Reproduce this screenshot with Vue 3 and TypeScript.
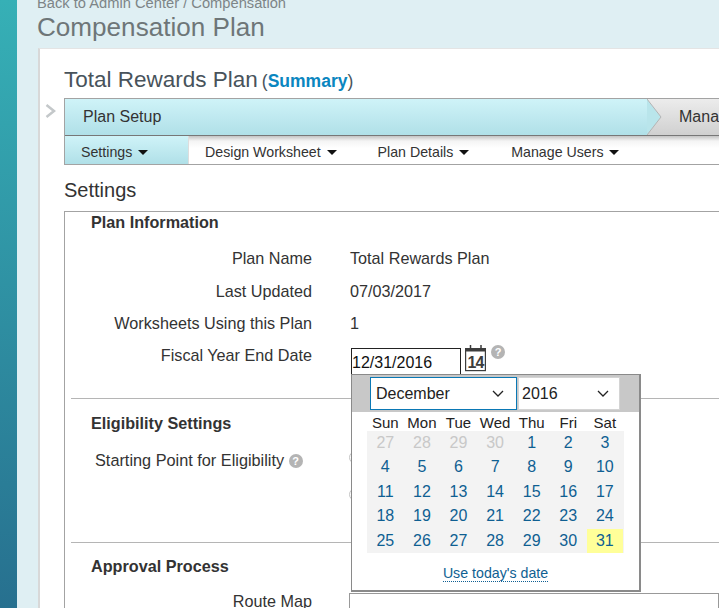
<script setup lang="ts">
const planRows = [
  { label: 'Plan Name', value: 'Total Rewards Plan' },
  { label: 'Last Updated', value: '07/03/2017' },
  { label: 'Worksheets Using this Plan', value: '1' },
]

const subTabs = ['Settings', 'Design Worksheet', 'Plan Details', 'Manage Users']
const weekDays = ['Sun', 'Mon', 'Tue', 'Wed', 'Thu', 'Fri', 'Sat']

// December 2016, with the tail of November greyed out
const days = [
  ...[27, 28, 29, 30].map((n) => ({ n, muted: true })),
  ...Array.from({ length: 31 }, (_, i) => ({ n: i + 1, muted: false })),
]
</script>

<template>
  <div class="page">
    <aside class="side-strip"></aside>
    <main class="main">
      <div class="crumbs">Back to Admin Center / Compensation</div>
      <h1 class="page-title">Compensation Plan</h1>

      <section class="card">
        <h2 class="plan-title">Total Rewards Plan<small>(<a>Summary</a>)</small></h2>

        <div class="wizard-wrap">
          <svg class="collapse" width="11" height="14" viewBox="0 0 11 14">
            <path d="M1.5 1 L9 7 L1.5 13" fill="none" stroke="#c4c8ca" stroke-width="2.5" />
          </svg>
          <div class="wizard">
            <div class="steps">
              <div class="step active">Plan Setup</div>
              <svg class="arrow" width="15" height="36" viewBox="0 0 15 36">
                <path d="M0 0 L14 18 L0 36 Z" fill="#b9e5eb" />
                <path d="M0 0 L14 18 L0 36" fill="none" stroke="#b4b4b4" />
              </svg>
              <div class="step other">Manage Forms</div>
            </div>
            <div class="sub-tabs">
              <div v-for="(tab, i) in subTabs" :key="tab" class="sub-tab" :class="{ current: i === 0 }">
                {{ tab }} <i class="caret"></i>
              </div>
            </div>
          </div>
        </div>

        <h3 class="section-title">Settings</h3>

        <div class="settings-box">
          <div class="group first">
            <h4>Plan Information</h4>
            <div v-for="row in planRows" :key="row.label" class="row">
              <label>{{ row.label }}</label>
              <span>{{ row.value }}</span>
            </div>
            <div class="row date-row">
              <label>Fiscal Year End Date</label>
              <div class="date-field">
                <div class="date-input">12/31/2016</div>
                <svg class="cal-icon" width="23" height="27" viewBox="0 0 23 27">
                  <rect x="1.6" y="3.6" width="19.8" height="22" fill="#fff" stroke="#3d3d3d" stroke-width="1.2" />
                  <rect x="1" y="3" width="21" height="3.5" fill="#3d3d3d" />
                  <path d="M6.5 0v5.5M17 0v5.5" stroke="#3d3d3d" stroke-width="1.5" />
                  <text x="11.5" y="22.5" text-anchor="middle" class="cal-num">14</text>
                </svg>
                <span class="help date-help">?</span>

                <div class="calendar">
                  <div class="cal-head">
                    <div class="fake-select month">
                      December
                      <svg width="12" height="7" viewBox="0 0 12 7"><path d="M1 1l5 5 5-5" fill="none" stroke="#222" stroke-width="1.3" /></svg>
                    </div>
                    <div class="fake-select year">
                      2016
                      <svg width="12" height="7" viewBox="0 0 12 7"><path d="M1 1l5 5 5-5" fill="none" stroke="#222" stroke-width="1.3" /></svg>
                    </div>
                  </div>
                  <div class="cal-weekdays">
                    <span v-for="d in weekDays" :key="d">{{ d }}</span>
                  </div>
                  <div class="cal-grid">
                    <span
                      v-for="d in days"
                      :key="(d.muted ? 'p' : 'c') + d.n"
                      :class="{ muted: d.muted, selected: !d.muted && d.n === 31 }"
                    >{{ d.n }}</span>
                  </div>
                  <div class="cal-foot"><a>Use today's date</a></div>
                </div>
              </div>
            </div>
          </div>

          <div class="group eligibility">
            <h4>Eligibility Settings</h4>
            <div class="start-row">
              <label>Starting Point for Eligibility <span class="help">?</span></label>
              <div class="radios">
                <i class="radio"></i>
                <i class="radio"></i>
              </div>
            </div>
          </div>

          <div class="group approval">
            <h4>Approval Process</h4>
            <div class="row route-row">
              <label>Route Map</label>
              <div class="route-input"></div>
            </div>
          </div>
        </div>
      </section>
    </main>
  </div>
</template>

<style scoped>
.page {
  display: flex;
  width: 719px;
  height: 608px;
  overflow: hidden;
  background: #dfeff3;
  font-family: "Liberation Sans", Arial, sans-serif;
  color: #333;
}

.side-strip {
  flex: 0 0 17px;
  background: linear-gradient(180deg, #36b0b6 0%, #27708f 100%);
}

.main {
  flex: 1;
  min-width: 0;
  padding-left: 21px;
}

.crumbs {
  margin: -5px 0 0 -1px;
  font-size: 14.7px;
  line-height: 16px;
  color: #7d8587;
}

.page-title {
  margin: -1px 0 0 -1px;
  font-size: 26.1px;
  font-weight: normal;
  line-height: 34px;
  color: #6e7678;
}

.card {
  height: 600px;
  margin-top: 4px;
  padding-top: 17px;
  background: #fff;
  border-left: 2px solid #d8d8d8;
  border-top: 1px solid #e4e4e4;
}

.plan-title {
  margin: 0 0 0 24px;
  font-size: 22.5px;
  font-weight: normal;
  line-height: 28px;
  color: #48535b;
}

.plan-title small {
  font-size: 17.5px;
  margin-left: 4px;
}

.plan-title a {
  font-weight: bold;
  color: #0a86c0;
}

.wizard-wrap {
  position: relative;
  margin: 3px 0 0 24px;
}

.collapse {
  position: absolute;
  left: -19px;
  top: 6px;
}

.wizard {
  border: 1px solid #a3a3a3;
  border-right: none;
  overflow: hidden;
}

.steps {
  display: flex;
  height: 36px;
  border-bottom: 1px solid #777;
}

.step {
  display: flex;
  align-items: center;
  font-size: 16px;
}

.step.active {
  flex: 0 0 582px;
  box-sizing: border-box;
  padding-left: 18px;
  background: linear-gradient(180deg, #cff3f8, #b0e0e8);
}

.arrow {
  flex: none;
  background: linear-gradient(180deg, #ececec, #d0d0d0);
}

.step.other {
  flex: 1;
  padding-left: 17px;
  white-space: nowrap;
  background: linear-gradient(180deg, #ececec, #d0d0d0);
}

.sub-tabs {
  display: flex;
  height: 28px;
  background: linear-gradient(180deg, #c4c4c4 0, #f4f4f4 5px, #fff 12px);
}

.sub-tab {
  padding: 6px 0 0;
  font-size: 14.2px;
  line-height: 21px;
  white-space: nowrap;
}

.sub-tab:nth-child(1) {
  width: 124px;
  padding-left: 16px;
  box-sizing: border-box;
  background: linear-gradient(180deg, #cff3f8, #b0e0e8);
  border-right: 1px solid #ddd;
}

.sub-tab:nth-child(2) {
  margin-left: 16px;
}

.sub-tab:nth-child(3) {
  margin-left: 41px;
}

.sub-tab:nth-child(4) {
  margin-left: 42px;
}

.caret {
  display: inline-block;
  margin-left: 2px;
  vertical-align: 2px;
  border-left: 5px solid transparent;
  border-right: 5px solid transparent;
  border-top: 5px solid #111;
}

.section-title {
  margin: 13px 0 0 24px;
  font-size: 20px;
  font-weight: normal;
  line-height: 24px;
}

.settings-box {
  margin: 9px 0 0 24px;
  padding-left: 6px;
  border-top: 1px solid #a3a3a3;
  border-left: 1px solid #a3a3a3;
}

.group {
  border-top: 1px solid #b5b5b5;
}

.group.first {
  height: 186px;
  border-top: none;
}

.group h4 {
  margin: 0 0 0 20px;
  font-size: 16.2px;
  line-height: 20px;
}

.row {
  display: flex;
  align-items: flex-start;
  height: 32.5px;
  font-size: 16.2px;
  line-height: 20px;
}

.row label {
  flex: 0 0 241px;
  text-align: right;
}

.row > span {
  margin-left: 38px;
}

.first h4 {
  margin-bottom: 16px;
}

.date-row {
  margin-top: -1px;
}

.date-field {
  position: relative;
  display: flex;
  align-items: flex-start;
  margin: -4px 0 0 39px;
  font-size: 16px;
}

.date-input {
  box-sizing: border-box;
  width: 110px;
  height: 27px;
  margin-top: 7px;
  padding: 5px 0 0;
  line-height: 18px;
  border: 1px solid #222;
  color: #111;
}

.cal-icon {
  margin: 4px 0 0 3px;
}

.cal-num {
  font-size: 16px;
  font-weight: bold;
  letter-spacing: -1px;
  fill: #3d3d3d;
}

.help {
  display: inline-block;
  width: 14px;
  height: 14px;
  border-radius: 50%;
  background: #b4b4b4;
  color: #fff;
  font-size: 11px;
  font-weight: bold;
  line-height: 14px;
  text-align: center;
}

.date-help {
  margin: 4px 0 0 4px;
}

.calendar {
  position: absolute;
  left: 0;
  top: 33px;
  z-index: 2;
  box-sizing: border-box;
  width: 290px;
  height: 218px;
  background: #fff;
  border: 1px solid #8a8a8a;
  border-right-width: 2px;
  border-bottom-width: 2px;
  color: #222;
}

.cal-head {
  display: flex;
  gap: 1px;
  height: 37px;
  padding: 2px 0 0 18px;
  box-sizing: border-box;
  background: #c8c8c8;
}

.fake-select {
  display: flex;
  align-items: center;
  justify-content: space-between;
  box-sizing: border-box;
  height: 33px;
  padding: 1px 12px 0 5px;
  background: #fff;
  border: 1px solid #d4d4d4;
}

.fake-select.month {
  width: 147px;
  border-color: #0a78b5;
}

.fake-select.year {
  width: 102px;
  padding: 1px 10px 0 3px;
}

.cal-weekdays,
.cal-grid {
  display: grid;
  grid-template-columns: repeat(7, 36.6px);
  margin-left: 15px;
  text-align: center;
}

.cal-weekdays {
  height: 17px;
  margin-top: 2px;
  line-height: 17px;
  font-size: 15px;
}

.cal-grid {
  grid-auto-rows: 24.6px;
  width: 257px;
  background: #f3f3f3;
  line-height: 24px;
  color: #0f5f92;
}

.cal-grid .muted {
  color: #c8c8c8;
}

.cal-grid .selected {
  background: #ffff99;
}

.cal-foot {
  margin-top: 11px;
  text-align: center;
  font-size: 14.2px;
  line-height: 18px;
}

.cal-foot a {
  color: #0f5f92;
  border-bottom: 1px dotted #0f5f92;
}

.eligibility {
  height: 143px;
}

.eligibility h4 {
  margin-top: 14px;
  margin-bottom: 17px;
}

.start-row {
  display: flex;
  font-size: 16.3px;
  line-height: 20px;
}

.start-row label {
  flex: 0 0 278px;
  padding-left: 24px;
  box-sizing: border-box;
}

.start-row .help {
  margin-left: 0;
  vertical-align: 1px;
}

.radios {
  display: flex;
  flex-direction: column;
  gap: 24px;
  padding-top: 1px;
}

.radio {
  box-sizing: border-box;
  width: 13px;
  height: 13px;
  border: 1px solid #c4c4c4;
  border-radius: 50%;
}

.approval h4 {
  margin-top: 13px;
  margin-bottom: 15px;
}

.route-input {
  flex: 1;
  height: 40px;
  margin: 2px 0 0 37px;
  border: 1px solid #999;
}
</style>
